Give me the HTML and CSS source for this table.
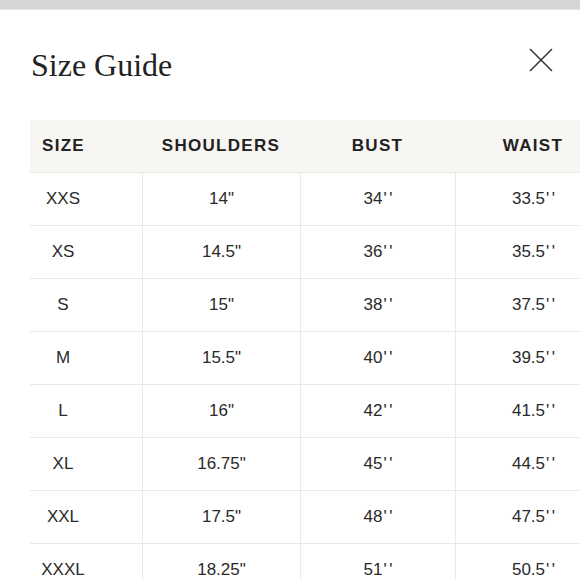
FILE: index.html
```html
<!DOCTYPE html>
<html lang="en">
<head>
<meta charset="utf-8">
<title>Size Guide</title>
<link rel="stylesheet" href="styles.css">
</head>
<body>
<div class="topbar"></div>
<div class="modal">
  <div class="modal-head">
    <h1 class="title">Size Guide</h1>
    <button class="close" aria-label="Close">
      <svg width="24" height="24" viewBox="0 0 24 24"><path d="M1 1 L23 23 M23 1 L1 23" stroke="#333" stroke-width="1.5" fill="none"/></svg>
    </button>
  </div>
  <div class="table">
    <div class="row head">
      <div class="cell first">SIZE</div>
      <div class="cell">SHOULDERS</div>
      <div class="cell">BUST</div>
      <div class="cell">WAIST</div>
    </div>
    <div class="row"><div class="cell first">XXS</div><div class="cell">14"</div><div class="cell">34<span class="in">''</span></div><div class="cell">33.5<span class="in">''</span></div></div>
    <div class="row"><div class="cell first">XS</div><div class="cell">14.5"</div><div class="cell">36<span class="in">''</span></div><div class="cell">35.5<span class="in">''</span></div></div>
    <div class="row"><div class="cell first">S</div><div class="cell">15"</div><div class="cell">38<span class="in">''</span></div><div class="cell">37.5<span class="in">''</span></div></div>
    <div class="row"><div class="cell first">M</div><div class="cell">15.5"</div><div class="cell">40<span class="in">''</span></div><div class="cell">39.5<span class="in">''</span></div></div>
    <div class="row"><div class="cell first">L</div><div class="cell">16"</div><div class="cell">42<span class="in">''</span></div><div class="cell">41.5<span class="in">''</span></div></div>
    <div class="row"><div class="cell first">XL</div><div class="cell">16.75"</div><div class="cell">45<span class="in">''</span></div><div class="cell">44.5<span class="in">''</span></div></div>
    <div class="row"><div class="cell first">XXL</div><div class="cell">17.5"</div><div class="cell">48<span class="in">''</span></div><div class="cell">47.5<span class="in">''</span></div></div>
    <div class="row"><div class="cell first">XXXL</div><div class="cell">18.25"</div><div class="cell">51<span class="in">''</span></div><div class="cell">50.5<span class="in">''</span></div></div>
  </div>
</div>
</body>
</html>
```
FILE: styles.css
```css
html, body {
  margin: 0;
  padding: 0;
  overflow: hidden;
  background: #ffffff;
  width: 580px;
  height: 580px;
}
.topbar {
  height: 9px;
  background: #d7d4d4;
  border-bottom: 1px solid #e6e4e4;
}
.modal {
  padding: 37px 0 0 30px;
}
.modal-head {
  display: flex;
  justify-content: space-between;
  align-items: flex-start;
  width: 523px;
}
.title {
  margin: 0 0 0 1px;
  font-family: "Liberation Serif", "Times New Roman", serif;
  font-weight: 400;
  font-size: 32px;
  line-height: 36px;
  color: #222;
}
.close {
  margin: 1px 0 0 0;
  padding: 0;
  border: 0;
  background: none;
  width: 24px;
  height: 24px;
  display: block;
}
.close svg { display: block; }
.table {
  margin-top: 37px;
  width: 581px;
  font-family: "Liberation Sans", Arial, sans-serif;
  color: #2a2a2a;
}
.row {
  display: grid;
  grid-template-columns: 112px 158px 155px 156px;
  height: 53px;
  box-sizing: border-box;
  border-top: 1px solid #ece9e4;
}
.row.head {
  height: 52px;
  border-top: 0;
  background: #f8f6f2;
}
.cell {
  display: flex;
  align-items: center;
  justify-content: center;
  font-size: 17px;
  border-left: 1px solid #ece9e4;
}
.in {
  margin-left: 1px;
  letter-spacing: 2.5px;
  margin-right: -2.5px;
}
.cell.first {
  border-left: 0;
  padding-right: 46px;
}
.head .cell {
  border-left: 0;
  font-weight: 700;
  letter-spacing: 1.3px;
  color: #222;
}
.head .cell.first {
  justify-content: flex-start;
  padding: 0 0 0 12px;
}
```
